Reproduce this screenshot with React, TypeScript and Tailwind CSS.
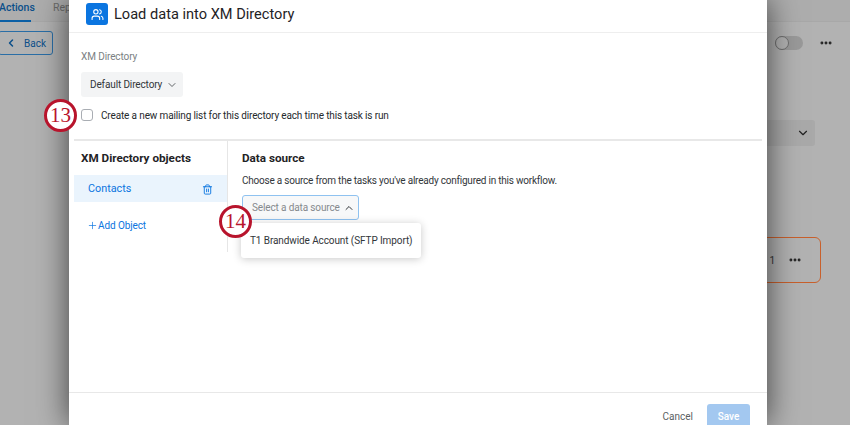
import { ChevronDown, ChevronLeft, ChevronUp, MoreHorizontal, Trash2, Plus, Users } from "lucide-react";

function StepBadge({ n, className }: { n: number; className: string }) {
  return (
    <div
      className={`absolute flex h-[33px] w-[33px] items-center justify-center rounded-full border-[3.5px] border-[#b8142c] bg-white font-['Liberation_Serif',serif] text-[21px] leading-none text-[#b8142c] ${className}`}
    >
      {n}
    </div>
  );
}

function Background() {
  return (
    <div className="flex h-full flex-col bg-[#b2b2b2]">
      <div className="flex h-[22px] shrink-0 items-start border-b border-[#a8a8a8] bg-[#adadad]">
        <div className="ml-[-1px] flex h-[22px] w-[32px] items-start whitespace-nowrap border-b-2 border-[#0b5fa5] pt-[1px] text-[10.5px] font-medium leading-[14px] text-[#0b4f8a]">
          Actions
        </div>
        <span className="ml-[22px] pt-[1px] text-[10.5px] leading-[14px] text-[#6b6b6b]">Rep</span>
      </div>
      <div className="flex items-start justify-between pl-0 pr-[17px] pt-[9px]">
        <div className="ml-[-2px] flex h-[24px] w-[55px] items-center gap-[7px] rounded-[3px] border border-[#2a6ea6] pl-[6px] text-[10px] text-[#0b4f8a]">
          <ChevronLeft className="h-3 w-3" strokeWidth={3} />
          Back
        </div>
        <div className="flex items-center gap-[16px] pt-[5px]">
          <div className="h-[14px] w-[28px] rounded-full bg-[#999999]">
            <div className="h-[14px] w-[14px] rounded-full border border-[#6f6f6f] bg-[#b2b2b2]" />
          </div>
          <MoreHorizontal className="h-[14px] w-[14px] text-[#222222]" strokeWidth={3} />
        </div>
      </div>
      <div className="mt-[65px] flex justify-end pr-[35px]">
        <div className="flex h-[26px] w-[60px] items-center justify-end rounded-[3px] bg-[#a9a9a9] pr-[5px]">
          <ChevronDown className="h-[14px] w-[14px] text-[#222222]" strokeWidth={2} />
        </div>
      </div>
      <div className="mt-[91px] flex justify-end pr-[29px]">
        <div className="flex h-[46px] w-[120px] items-center justify-end gap-[13px] rounded-[6px] border border-[#c8602c] pr-[18px]">
          <span className="text-[10px] text-[#333333]">1</span>
          <MoreHorizontal className="h-[14px] w-[14px] text-[#222222]" strokeWidth={3} />
        </div>
      </div>
    </div>
  );
}

function Modal() {
  return (
    <div className="absolute inset-y-0 left-[69px] flex w-[698px] flex-col bg-white text-[#32363a] shadow-[0_0_30px_rgba(0,0,0,0.65)]">
      <div className="flex h-[33px] shrink-0 items-center gap-[6px] border-b border-[#eeeeee] pb-[4px] pl-[17px]">
        <div className="flex h-[22px] w-[22px] items-center justify-center rounded-[3px] bg-[#0b75e0]">
          <Users className="h-[13px] w-[13px] text-white" strokeWidth={2} />
        </div>
        <h1 className="text-[14.6px] leading-none text-[#1f2326]">Load data into XM Directory</h1>
      </div>

      <div className="flex-1 px-[5px]">
        <div className="pl-[7px] pt-[17px] text-[10px] leading-[14px] tracking-[-0.1px] text-[#7b7f83]">XM Directory</div>
        <div className="ml-[7px] mt-[8px] flex h-[25px] w-[102px] items-center gap-[4px] rounded-[3px] bg-[#f3f4f5] pl-[9px] text-[10px] tracking-[-0.13px] text-[#32363a]">
          Default Directory
          <ChevronDown className="h-[12px] w-[12px]" strokeWidth={1.5} />
        </div>
        <div className="ml-[7px] mt-[11px] flex h-[14px] items-center gap-[8px] text-[10px] tracking-[-0.14px] text-[#25292c]">
          <div className="h-[12px] w-[12px] rounded-[3px] border border-[#a9adb3] bg-white" />
          Create a new mailing list for this directory each time this task is run
        </div>

        <div className="mt-[17px] flex h-[113px] border-t-2 border-[#e8e8e8]">
          <div className="w-[154px] shrink-0 border-r border-[#e6e6e6] pt-[10px]">
            <div className="pl-[7px] text-[11.7px] font-bold leading-[14px] text-[#1f2326]">XM Directory objects</div>
            <div className="mt-[10px] flex h-[27px] items-center justify-between bg-[#eaf4fd] px-[14px] pt-[1px] text-[10.8px] text-[#0b75e0]">
              Contacts
              <Trash2 className="h-[11px] w-[11px]" strokeWidth={2} />
            </div>
            <div className="mt-[16px] flex items-center pl-[13px] text-[10px] tracking-[-0.1px] text-[#0b75e0]">
              <Plus className="h-[11px] w-[11px]" strokeWidth={1.5} />
              Add Object
            </div>
          </div>
          <div className="relative pl-[14px] pt-[10px]">
            <div className="text-[11.7px] font-bold leading-[14px] text-[#1f2326]">Data source</div>
            <div className="mt-[9px] whitespace-nowrap text-[10px] leading-[14px] tracking-[-0.22px] text-[#32363a]">
              Choose a source from the tasks you've already configured in this workflow.
            </div>
            <div className="mt-[7px] flex h-[25px] w-[117px] items-center gap-[3px] whitespace-nowrap rounded-[3px] border border-[#8fc2f0] bg-[#f7f8f9] pl-[9px] text-[10px] tracking-[-0.13px] text-[#85898d]">
              Select a data source
              <ChevronUp className="h-[12px] w-[12px] text-[#32363a]" strokeWidth={2} />
            </div>
            <div className="absolute left-[13px] top-[82px] flex h-[35px] w-[180px] items-center whitespace-nowrap rounded-[3px] bg-white pl-[9px] text-[10px] tracking-[-0.1px] text-[#32363a] shadow-[0_1px_8px_rgba(0,0,0,0.22)]">
              T1 Brandwide Account (SFTP Import)
            </div>
          </div>
        </div>
      </div>

      <div className="flex h-[33px] shrink-0 items-start justify-end gap-[14px] border-t border-[#e8e8e8] pr-[17px] pt-[11px] text-[10px]">
        <span className="pt-[5px] text-[#5b5f63]">Cancel</span>
        <div className="flex h-[30px] w-[43px] items-start justify-center rounded-t-[3px] bg-[#a3c8f0] pt-[5px] font-medium text-white">
          Save
        </div>
      </div>
    </div>
  );
}

export default function App() {
  return (
    <div className="relative h-[425px] w-[850px] overflow-hidden font-['Roboto',sans-serif]">
      <Background />
      <Modal />
      <StepBadge n={13} className="left-[44px] top-[99px]" />
      <StepBadge n={14} className="left-[219px] top-[205px]" />
    </div>
  );
}
